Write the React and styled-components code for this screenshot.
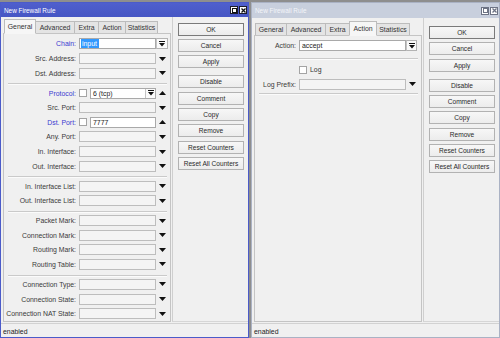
import React from 'react';
import styled, { createGlobalStyle } from 'styled-components';

const Global = createGlobalStyle`
  html, body { margin: 0; padding: 0; background: #8e8e8e; }
  body { font-family: "Liberation Sans", Arial, sans-serif; font-size: 6.9px; color: #333; }
`;

const Screen = styled.div`
  width: 500px;
  height: 338px;
  box-sizing: border-box;
  padding-top: 2px;
  display: flex;
  gap: 2px;
  overflow: hidden;
`;

const Win = styled.div`
  width: 249px;
  height: 336px;
  box-sizing: border-box;
  border: 1px solid ${p => (p.$active ? '#4b5bc9' : '#aab2c4')};
  background: #f0f0f0;
  display: flex;
  flex-direction: column;
`;

const TitleBar = styled.div`
  height: ${p => p.$h}px;
  flex: none;
  display: flex;
  align-items: center;
  justify-content: space-between;
  padding: 0 1px 0 3px;
  background: ${p => (p.$active ? 'linear-gradient(#4f5fcd, #4656c4)' : '#c8cfdd')};
  color: ${p => (p.$active ? '#ffffff' : '#f3f5f9')};
  font-size: 6.4px;
`;

const Controls = styled.div`
  display: flex;
  gap: 1px;
`;

const CtrlBox = styled.div`
  width: 8px;
  height: 8px;
  box-sizing: border-box;
  border: 1px solid ${p => (p.$active ? '#1c1c2c' : '#6d7384')};
  background: #fff;
  display: flex;
  align-items: center;
  justify-content: center;
`;

const Main = styled.div`
  flex: 1;
  min-height: 0;
  display: flex;
`;

const LeftCol = styled.div`
  width: 168px;
  margin-left: 2px;
  padding-top: ${p => p.$pt}px;
  padding-bottom: 1px;
  display: flex;
  flex-direction: column;
`;

const TabRow = styled.div`
  height: 14px;
  flex: none;
  display: flex;
  align-items: flex-end;
  padding-left: 1px;
  position: relative;
  z-index: 1;
`;

const Tab = styled.div`
  width: ${p => p.$w}px;
  height: ${p => (p.$active ? 15 : 12)}px;
  margin-bottom: ${p => (p.$active ? -1 : 0)}px;
  margin-right: -1px;
  box-sizing: border-box;
  border: 1px solid #bcbcbc;
  border-bottom: ${p => (p.$active ? '1px solid #f6f6f6' : 'none')};
  background: ${p => (p.$active ? '#f6f6f6' : '#e4e4e4')};
  display: flex;
  align-items: center;
  justify-content: center;
  padding-bottom: ${p => (p.$active ? 1 : 0)}px;
  color: #333;
  white-space: nowrap;
`;

const Panel = styled.div`
  flex: 1;
  border: 1px solid #c4c4c4;
  background: #f0f0f0;
  padding-top: 2.7px;
  display: flex;
  flex-direction: column;
`;

const Row = styled.div`
  display: grid;
  grid-template-columns: ${p => p.$label}px ${p => p.$field}px 12px;
  height: 14.6px;
  align-items: center;
`;

const Label = styled.div`
  text-align: right;
  padding-right: 3px;
  white-space: nowrap;
  color: ${p => (p.$blue ? '#3a3ad0' : '#3a3a3a')};
`;

const FieldWrap = styled.div`
  display: flex;
  align-items: center;
  gap: 3px;
  height: 11px;
`;

const InputBox = styled.div`
  flex: 1;
  height: 11px;
  box-sizing: border-box;
  border: 1px solid ${p => (p.$filled ? '#a9a9a9' : '#bdbdbd')};
  background: ${p => (p.$filled ? '#ffffff' : '#f4f4f4')};
  display: flex;
  align-items: center;
  padding-left: 1px;
  color: #222;
  white-space: nowrap;
  overflow: hidden;
`;

const InText = styled.span`
  flex: 1;
  padding-left: 1px;
`;

const Selected = styled.span`
  background: #3399ff;
  color: #fff;
  padding: 0 2px 0 1px;
  line-height: 9px;
`;

const ComboBtn = styled.div`
  width: ${p => p.$w}px;
  height: ${p => (p.$inside ? 9 : 11)}px;
  box-sizing: border-box;
  border: ${p => (p.$inside ? 'none' : '1px solid #b3b3b3')};
  border-left: 1px solid #c4c4c4;
  margin-left: ${p => (p.$inside ? 0 : -1)}px;
  background: #fafafa;
  display: flex;
  align-items: center;
  justify-content: center;
`;

const ArrowCell = styled.div`
  display: flex;
  align-items: center;
  justify-content: center;
  height: 11px;
`;

const Check = styled.div`
  width: 8px;
  height: 8px;
  flex: none;
  box-sizing: border-box;
  border: 1px solid #a4a4a4;
  background: #fff;
`;

const CheckLabel = styled.span`
  color: #333;
`;

const Separator = styled.div`
  height: 1px;
  flex: none;
  background: #cacaca;
  box-shadow: 0 1px 0 #fbfbfb;
  margin: ${p => p.$mt}px 3px ${p => p.$mb}px 4px;
`;

const ButtonCol = styled.div`
  flex: 1;
  margin-left: 1px;
  border-left: 1px solid #cfcfcf;
  border-bottom: 1px solid #d6d6d6;
  margin-bottom: 1px;
  padding: ${p => p.$pt}px 0 0 5px;
  display: flex;
  flex-direction: column;
  gap: 3.3px;
`;

const Btn = styled.div`
  width: 66px;
  height: 13px;
  box-sizing: border-box;
  border: 1px solid ${p => (p.$default ? '#7a7a7a' : '#b2b2b2')};
  background: linear-gradient(#f7f7f7, #ececec);
  margin-top: ${p => (p.$gap ? 4 : 0)}px;
  display: flex;
  align-items: center;
  justify-content: center;
  font-size: 6.6px;
  color: #2a2a2a;
  white-space: nowrap;
`;

const Status = styled.div`
  height: 14px;
  flex: none;
  box-sizing: border-box;
  border-top: 1px solid #d2d2d2;
  padding: ${p => p.$pt}px 0 0 2px;
  color: #222;
  display: flex;
  align-items: center;
`;

const Down = () => (
  <svg width="7" height="4" viewBox="0 0 7 4"><polygon points="0,0 7,0 3.5,4" fill="#111" /></svg>
);
const Up = () => (
  <svg width="7" height="4" viewBox="0 0 7 4"><polygon points="0,4 7,4 3.5,0" fill="#111" /></svg>
);
const ComboIcon = () => (
  <svg width="6" height="6" viewBox="0 0 6 6">
    <rect x="0" y="0" width="6" height="1" fill="#111" />
    <polygon points="0,2 6,2 3,5.5" fill="#111" />
  </svg>
);

const MaxIcon = ({ c }) => (
  <svg width="5" height="5" viewBox="0 0 5 5"><rect x="0.5" y="0.5" width="4" height="4" fill="none" stroke={c} strokeWidth="1" /></svg>
);
const CloseIcon = ({ c }) => (
  <svg width="5" height="5" viewBox="0 0 5 5"><path d="M0.5 0.5 L4.5 4.5 M4.5 0.5 L0.5 4.5" stroke={c} strokeWidth="1.3" /></svg>
);

const tabs = ['General', 'Advanced', 'Extra', 'Action', 'Statistics'];

const Window = ({ active, activeTab, tabWidths, titleH, pt, btnPt, statusPt, children }) => {
  const c = active ? '#111' : '#6d7384';
  return (
    <Win $active={active}>
      <TitleBar $active={active} $h={titleH}>
        <span>New Firewall Rule</span>
        <Controls>
          <CtrlBox $active={active}><MaxIcon c={c} /></CtrlBox>
          <CtrlBox $active={active}><CloseIcon c={c} /></CtrlBox>
        </Controls>
      </TitleBar>
      <Main>
        <LeftCol $pt={pt}>
          <TabRow>
            {tabs.map((t, i) => (
              <Tab key={t} $w={tabWidths[i]} $active={t === activeTab}>{t}</Tab>
            ))}
          </TabRow>
          <Panel>{children}</Panel>
        </LeftCol>
        <ButtonCol $pt={btnPt}>
          <Btn $default>OK</Btn>
          <Btn>Cancel</Btn>
          <Btn>Apply</Btn>
          <Btn $gap>Disable</Btn>
          <Btn>Comment</Btn>
          <Btn>Copy</Btn>
          <Btn>Remove</Btn>
          <Btn>Reset Counters</Btn>
          <Btn>Reset All Counters</Btn>
        </ButtonCol>
      </Main>
      <Status $pt={statusPt}>enabled</Status>
    </Win>
  );
};

const EmptyRow = ({ label }) => (
  <Row $label={75} $field={77}>
    <Label>{label}</Label>
    <FieldWrap><InputBox /></FieldWrap>
    <ArrowCell><Down /></ArrowCell>
  </Row>
);

const GeneralTab = () => (
  <>
    <Row $label={75} $field={77}>
      <Label $blue>Chain:</Label>
      <FieldWrap><InputBox $filled><Selected>input</Selected></InputBox></FieldWrap>
      <ArrowCell><ComboBtn $w={12}><ComboIcon /></ComboBtn></ArrowCell>
    </Row>
    <EmptyRow label="Src. Address:" />
    <EmptyRow label="Dst. Address:" />
    <Separator $mt={3} $mb={1.4} />
    <Row $label={75} $field={77}>
      <Label $blue>Protocol:</Label>
      <FieldWrap>
        <Check />
        <InputBox $filled>
          <InText>6 (tcp)</InText>
          <ComboBtn $inside $w={10}><ComboIcon /></ComboBtn>
        </InputBox>
      </FieldWrap>
      <ArrowCell><Up /></ArrowCell>
    </Row>
    <EmptyRow label="Src. Port:" />
    <Row $label={75} $field={77}>
      <Label $blue>Dst. Port:</Label>
      <FieldWrap>
        <Check />
        <InputBox $filled><InText>7777</InText></InputBox>
      </FieldWrap>
      <ArrowCell><Up /></ArrowCell>
    </Row>
    <EmptyRow label="Any. Port:" />
    <EmptyRow label="In. Interface:" />
    <EmptyRow label="Out. Interface:" />
    <Separator $mt={3} $mb={1.4} />
    <EmptyRow label="In. Interface List:" />
    <EmptyRow label="Out. Interface List:" />
    <Separator $mt={3} $mb={1.4} />
    <EmptyRow label="Packet Mark:" />
    <EmptyRow label="Connection Mark:" />
    <EmptyRow label="Routing Mark:" />
    <EmptyRow label="Routing Table:" />
    <Separator $mt={3} $mb={1.4} />
    <EmptyRow label="Connection Type:" />
    <EmptyRow label="Connection State:" />
    <EmptyRow label="Connection NAT State:" />
  </>
);

const ActionTab = () => (
  <>
    <Row $label={44} $field={107}>
      <Label>Action:</Label>
      <FieldWrap><InputBox $filled><InText>accept</InText></InputBox></FieldWrap>
      <ArrowCell><ComboBtn $w={11}><ComboIcon /></ComboBtn></ArrowCell>
    </Row>
    <Separator $mt={5} $mb={3} />
    <Row $label={44} $field={107}>
      <span />
      <FieldWrap><Check /><CheckLabel>Log</CheckLabel></FieldWrap>
      <span />
    </Row>
    <Row $label={44} $field={107}>
      <Label>Log Prefix:</Label>
      <FieldWrap><InputBox /></FieldWrap>
      <ArrowCell><Down /></ArrowCell>
    </Row>
    <Separator $mt={1.5} $mb={0} />
  </>
);

export default function App() {
  return (
    <>
      <Global />
      <Screen>
        <Window active activeTab="General" tabWidths={[32, 40, 25, 28, 33]} titleH={14} pt={2} btnPt={5.5} statusPt={1}>
          <GeneralTab />
        </Window>
        <Window activeTab="Action" tabWidths={[32, 40, 25, 28, 34]} titleH={15} pt={3} btnPt={8} statusPt={2}>
          <ActionTab />
        </Window>
      </Screen>
    </>
  );
}
